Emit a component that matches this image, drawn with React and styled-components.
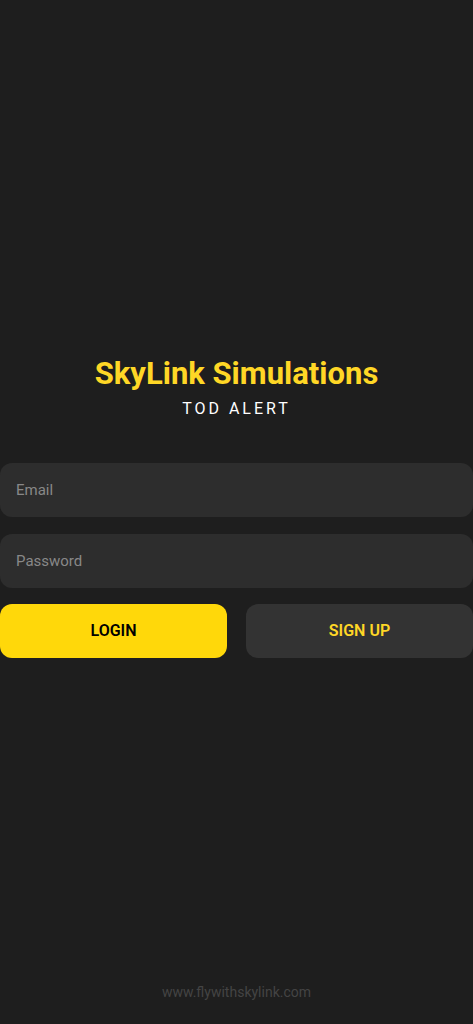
import React from "react";
import styled, { createGlobalStyle } from "styled-components";

const GlobalStyle = createGlobalStyle`
  *, *::before, *::after { box-sizing: border-box; }
  body { margin: 0; background: #1e1e1e; font-family: Roboto, Inter, sans-serif; }
  input, button { font-family: inherit; }
`;

const Screen = styled.div`
  display: flex;
  flex-direction: column;
  min-height: 100vh;
  background: #1e1e1e;
`;

const Main = styled.main`
  flex: 1;
  display: flex;
  flex-direction: column;
  justify-content: center;
  padding-top: 29px;
`;

const Header = styled.header`
  text-align: center;
  margin-bottom: 44px;
`;

const Title = styled.h1`
  margin: 0;
  color: #ffd726;
  font-size: 31px;
  line-height: 40px;
  font-weight: 700;
`;

const Subtitle = styled.p`
  margin: 5px 0 0;
  color: #fff;
  font-size: 16px;
  line-height: 20px;
  letter-spacing: 3px;
`;

const Form = styled.form`
  display: flex;
  flex-direction: column;
  gap: 16px;
`;

const Fields = styled.div`
  display: flex;
  flex-direction: column;
  gap: 17px;
`;

const Field = styled.input`
  width: 100%;
  height: 54px;
  padding: 0 16px;
  border: 0;
  border-radius: 12px;
  background: #2d2d2d;
  color: #fff;
  font-size: 15px;
  &::placeholder { color: #888; opacity: 1; }
`;

const Actions = styled.div`
  display: grid;
  grid-template-columns: 1fr 1fr;
  gap: 19px;
`;

const Button = styled.button`
  height: 54px;
  padding: 0;
  border: 0;
  border-radius: 12px;
  background: ${(p) => (p.$primary ? "#ffd80a" : "#333333")};
  color: ${(p) => (p.$primary ? "#000" : "#ffd726")};
  font-size: 16px;
  font-weight: 600;
  cursor: pointer;
`;

const Footer = styled.footer`
  padding-bottom: 22px;
  text-align: center;
  font-size: 14px;
  line-height: 20px;
`;

const SiteLink = styled.a`
  color: #444;
  text-decoration: none;
`;

export default function App() {
  return (
    <Screen>
      <GlobalStyle />
      <Main>
        <Header>
          <Title>SkyLink Simulations</Title>
          <Subtitle>TOD ALERT</Subtitle>
        </Header>
        <Form onSubmit={(e) => e.preventDefault()}>
          <Fields>
            <Field type="email" placeholder="Email" aria-label="Email" />
            <Field type="password" placeholder="Password" aria-label="Password" />
          </Fields>
          <Actions>
            <Button type="submit" $primary>LOGIN</Button>
            <Button type="button">SIGN UP</Button>
          </Actions>
        </Form>
      </Main>
      <Footer>
        <SiteLink href="#">www.flywithskylink.com</SiteLink>
      </Footer>
    </Screen>
  );
}
